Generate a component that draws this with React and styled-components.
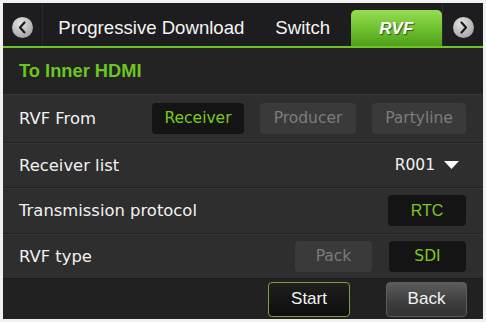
import styled, { createGlobalStyle } from 'styled-components';

const GlobalStyle = createGlobalStyle`
  html, body {
    margin: 0;
    padding: 0;
    background: #f1f1f1;
  }
`;

const Frame = styled.div`
  margin: 3px 3px 0 3px;
  width: 480px;
  height: 316px;
  background: #2e2e2e;
  display: flex;
  flex-direction: column;
  overflow: hidden;
`;

const TabBar = styled.div`
  height: 43px;
  display: flex;
  align-items: stretch;
  background: #1d1d1f;
  border-bottom: 2px solid #6cc425;
  font-family: 'Liberation Sans', Arial, sans-serif;
`;

const ArrowCell = styled.div`
  width: ${(p) => p.$width}px;
  padding-top: 5px;
  display: flex;
  align-items: center;
  justify-content: center;
  border-${(p) => p.$side}: 1px solid #2a2a2c;
`;

const ArrowCircle = styled.div`
  width: 21px;
  height: 21px;
  border-radius: 50%;
  background: radial-gradient(circle at 40% 30%, #e4e4e4, #a8a8a8 75%);
  display: flex;
  align-items: center;
  justify-content: center;
`;

const Tab = styled.div`
  width: ${(p) => p.$width}px;
  padding-top: 6px;
  display: flex;
  align-items: center;
  justify-content: center;
  color: #f4f4f4;
  font-size: 18.6px;
`;

const ActiveTab = styled.div`
  width: 92px;
  margin: 7px 0 0 5px;
  padding-top: 2px;
  border-radius: 5px 5px 0 0;
  background: linear-gradient(#96dc55, #6cc02c 55%, #4f9e1c);
  display: flex;
  align-items: center;
  justify-content: center;
  color: #fff;
  font-size: 17px;
  font-weight: bold;
  font-style: italic;
  text-shadow: 1px 1px 1px rgba(0, 0, 0, 0.55);
`;

const Header = styled.div`
  height: 45px;
  background: #232323;
  display: flex;
  align-items: center;
  padding-left: 16px;
  color: #6cc520;
  font-family: 'Liberation Sans', Arial, sans-serif;
  font-weight: bold;
  font-size: 18.3px;
`;

const Row = styled.div`
  height: ${(p) => p.$height}px;
  display: flex;
  align-items: center;
  padding: 0 17px 0 16px;
  border-top: 1px solid #222;
  box-shadow: inset 0 1px 0 #363636;
  font-family: 'DejaVu Sans', Verdana, sans-serif;
  font-size: 15.5px;
  color: #f2f2f2;
`;

const Label = styled.div`
  flex: 1;
  font-size: 16.4px;
`;

const Options = styled.div`
  display: flex;
  gap: ${(p) => p.$gap}px;
`;

const Option = styled.div`
  width: ${(p) => p.$width}px;
  height: 31px;
  border-radius: 4px;
  display: flex;
  align-items: center;
  justify-content: center;
  background: ${(p) => (p.$active ? '#141414' : '#3a3a3a')};
  color: ${(p) => (p.$active ? '#7cca1e' : '#7c7c7c')};
  font-family: ${(p) => (p.$sans ? "'Liberation Sans', Arial, sans-serif" : 'inherit')};
  font-size: ${(p) => (p.$sans ? 16 : 15.5)}px;
`;

const Select = styled.div`
  display: flex;
  align-items: center;
  gap: 9px;
  padding-right: 7px;
`;

const Footer = styled.div`
  flex: 1;
  background: #212121;
  border-top: 1px solid #1c1c1c;
  display: flex;
  align-items: center;
  justify-content: flex-end;
  gap: 36px;
  padding: 0 16px 0 0;
`;

const Button = styled.div`
  width: ${(p) => p.$width}px;
  height: 35px;
  box-sizing: border-box;
  border-radius: 4px;
  display: flex;
  align-items: center;
  justify-content: center;
  font-family: 'Liberation Sans', Arial, sans-serif;
  font-size: 17px;
  color: #f4f4f4;
  border: 1px solid ${(p) => (p.$primary ? '#7da23a' : '#5c5c5c')};
  background: ${(p) =>
    p.$primary
      ? 'linear-gradient(#1e1e1e, #0e0e0e)'
      : 'linear-gradient(#5c5c5c, #3c3c3c 60%, #333)'};
`;

function Chevron({ dir }) {
  const d = dir === 'left' ? 'M12.5 5.5 L8 10.5 L12.5 15.5' : 'M8.5 5.5 L13 10.5 L8.5 15.5';
  return (
    <svg width="21" height="21" viewBox="0 0 21 21">
      <path d={d} fill="none" stroke="#1b1b1b" strokeWidth="2.2" strokeLinecap="round" strokeLinejoin="round" />
    </svg>
  );
}

export default function App() {
  return (
    <>
      <GlobalStyle />
      <Frame>
        <TabBar>
          <ArrowCell $width={39} $side="right">
            <ArrowCircle>
              <Chevron dir="left" />
            </ArrowCircle>
          </ArrowCell>
          <Tab $width={218}>Progressive Download</Tab>
          <Tab $width={86}>Switch</Tab>
          <ActiveTab>RVF</ActiveTab>
          <ArrowCell $width={40} $side="left">
            <ArrowCircle>
              <Chevron dir="right" />
            </ArrowCircle>
          </ArrowCell>
        </TabBar>
        <Header>To Inner HDMI</Header>
        <Row $height={48}>
          <Label>RVF From</Label>
          <Options $gap={16}>
            <Option $width={92} $active>Receiver</Option>
            <Option $width={96}>Producer</Option>
            <Option $width={94}>Partyline</Option>
          </Options>
        </Row>
        <Row $height={44}>
          <Label>Receiver list</Label>
          <Select>
            R001
            <svg width="15" height="8" viewBox="0 0 15 8">
              <path d="M0 0 H15 L7.5 8 Z" fill="#fff" />
            </svg>
          </Select>
        </Row>
        <Row $height={45}>
          <Label>Transmission protocol</Label>
          <Options $gap={16}>
            <Option $width={78} $active $sans>RTC</Option>
          </Options>
        </Row>
        <Row $height={44}>
          <Label>RVF type</Label>
          <Options $gap={17}>
            <Option $width={77}>Pack</Option>
            <Option $width={77} $active>SDI</Option>
          </Options>
        </Row>
        <Footer>
          <Button $width={82} $primary>Start</Button>
          <Button $width={81}>Back</Button>
        </Footer>
      </Frame>
    </>
  );
}
